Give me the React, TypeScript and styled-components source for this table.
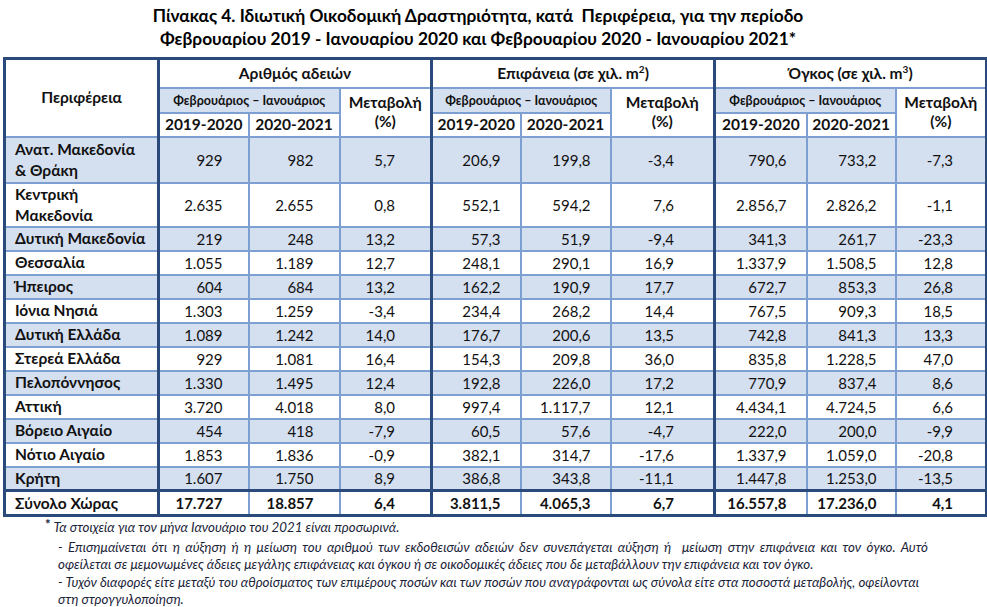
import styled, { createGlobalStyle } from 'styled-components';

const NAVY = '#294a7b';
const LINE = '#7e9fd2';
const FILL = '#d4dff0';

const GlobalStyle = createGlobalStyle`
    body {
        margin: 0;
        background: #ffffff;
        font-family: "Lato", "Noto Sans", sans-serif;
        color: #111111;
    }
`;

interface Col { w: number, pr: number, thick?: boolean }

const cols: Col[] = [
    { w: 90, pr: 25, thick: true }, { w: 91, pr: 25 }, { w: 92, pr: 35 },
    { w: 89, pr: 19, thick: true }, { w: 90, pr: 19 }, { w: 104, pr: 39 },
    { w: 92, pr: 19, thick: true }, { w: 89, pr: 18 }, { w: 91, pr: 32 },
];

const rows: string[][] = [
    ['Ανατ. Μακεδονία\n& Θράκη', '929', '982', '5,7', '206,9', '199,8', '-3,4', '790,6', '733,2', '-7,3'],
    ['Κεντρική\nΜακεδονία', '2.635', '2.655', '0,8', '552,1', '594,2', '7,6', '2.856,7', '2.826,2', '-1,1'],
    ['Δυτική Μακεδονία', '219', '248', '13,2', '57,3', '51,9', '-9,4', '341,3', '261,7', '-23,3'],
    ['Θεσσαλία', '1.055', '1.189', '12,7', '248,1', '290,1', '16,9', '1.337,9', '1.508,5', '12,8'],
    ['Ήπειρος', '604', '684', '13,2', '162,2', '190,9', '17,7', '672,7', '853,3', '26,8'],
    ['Ιόνια Νησιά', '1.303', '1.259', '-3,4', '234,4', '268,2', '14,4', '767,5', '909,3', '18,5'],
    ['Δυτική Ελλάδα', '1.089', '1.242', '14,0', '176,7', '200,6', '13,5', '742,8', '841,3', '13,3'],
    ['Στερεά Ελλάδα', '929', '1.081', '16,4', '154,3', '209,8', '36,0', '835,8', '1.228,5', '47,0'],
    ['Πελοπόννησος', '1.330', '1.495', '12,4', '192,8', '226,0', '17,2', '770,9', '837,4', '8,6'],
    ['Αττική', '3.720', '4.018', '8,0', '997,4', '1.117,7', '12,1', '4.434,1', '4.724,5', '6,6'],
    ['Βόρειο Αιγαίο', '454', '418', '-7,9', '60,5', '57,6', '-4,7', '222,0', '200,0', '-9,9'],
    ['Νότιο Αιγαίο', '1.853', '1.836', '-0,9', '382,1', '314,7', '-17,6', '1.337,9', '1.059,0', '-20,8'],
    ['Κρήτη', '1.607', '1.750', '8,9', '386,8', '343,8', '-11,1', '1.447,8', '1.253,0', '-13,5'],
];

const total = ['Σύνολο Χώρας', '17.727', '18.857', '6,4', '3.811,5', '4.065,3', '6,7', '16.557,8', '17.236,0', '4,1'];

const rowHeights = [46, 43, 24, 24, 24, 24, 24, 24, 24, 24, 24, 24, 24];

const blocks = [
    <>Αριθμός αδειών</>,
    <>Επιφάνεια (σε χιλ. m<sup>2</sup>)</>,
    <>Όγκος (σε χιλ. m<sup>3</sup>)</>,
];

export default function App(): JSX.Element {
    return (
        <Page>
            <GlobalStyle />
            <Title>
                Πίνακας 4. Ιδιωτική Οικοδομική Δραστηριότητα, κατά&nbsp; Περιφέρεια, για την περίοδο<br />
                Φεβρουαρίου 2019 - Ιανουαρίου 2020 και Φεβρουαρίου 2020 - Ιανουαρίου 2021*
            </Title>

            <Table>
                <colgroup>
                    <col style={{ width: 154 }} />
                    {cols.map((c, i) => <col key={i} style={{ width: c.w }} />)}
                </colgroup>
                <thead>
                    <tr style={{ height: 29 }}>
                        <HeadCell rowSpan={3}>Περιφέρεια</HeadCell>
                        {blocks.map((b, i) => (
                            <HeadCell key={i} colSpan={3} $thick>{b}</HeadCell>
                        ))}
                    </tr>
                    <tr style={{ height: 25 }}>
                        {blocks.map((_, i) => (
                            <>
                                <PeriodCell key={`p${i}`} colSpan={2}>Φεβρουάριος – Ιανουάριος</PeriodCell>
                                <HeadCell key={`m${i}`} rowSpan={2}>Μεταβολή<br />(%)</HeadCell>
                            </>
                        ))}
                    </tr>
                    <tr style={{ height: 24 }}>
                        {blocks.map((_, i) => (
                            <>
                                <HeadCell key={`a${i}`} $thick>2019-2020</HeadCell>
                                <HeadCell key={`b${i}`}>2020-2021</HeadCell>
                            </>
                        ))}
                    </tr>
                </thead>
                <tbody>
                    {rows.map((r, ri) => (
                        <Row key={r[0]} $fill={ri % 2 === 0} style={{ height: rowHeights[ri] }}>
                            <NameCell>{r[0]}</NameCell>
                            {r.slice(1).map((v, ci) => (
                                <NumCell key={ci} $pr={cols[ci].pr} $thick={cols[ci].thick}>{v}</NumCell>
                            ))}
                        </Row>
                    ))}
                    <TotalRow style={{ height: 25 }}>
                        <NameCell>{total[0]}</NameCell>
                        {total.slice(1).map((v, ci) => (
                            <NumCell key={ci} $pr={cols[ci].pr} $thick={cols[ci].thick}>{v}</NumCell>
                        ))}
                    </TotalRow>
                </tbody>
            </Table>

            <Notes>
                <NoteLine $first><Star>*</Star> Τα στοιχεία για τον μήνα Ιανουάριο του 2021 είναι προσωρινά.</NoteLine>
                <NoteLine $indent $justify>- Επισημαίνεται ότι η αύξηση ή η μείωση του αριθμού των εκδοθεισών αδειών δεν συνεπάγεται αύξηση ή&nbsp; μείωση στην επιφάνεια και τον όγκο. Αυτό</NoteLine>
                <NoteLine $indent>οφείλεται σε μεμονωμένες άδειες μεγάλης επιφάνειας και όγκου ή σε οικοδομικές άδειες που δε μεταβάλλουν την επιφάνεια και τον όγκο.</NoteLine>
                <NoteLine $indent>- Τυχόν διαφορές είτε μεταξύ του αθροίσματος των επιμέρους ποσών και των ποσών που αναγράφονται ως σύνολα είτε στα ποσοστά μεταβολής, οφείλονται</NoteLine>
                <NoteLine $indent>στη στρογγυλοποίηση.</NoteLine>
            </Notes>
        </Page>
    )
}


const Page = styled.div`
    width: 987px;
    padding: 4px 0 0 3px;
    box-sizing: border-box;
`;

const Title = styled.div`
    width: 950px;
    text-align: center;
    font-weight: 700;
    font-size: 17.3px;
    line-height: 23px;
    color: #000000;
    margin-bottom: 7px;
`;

const Table = styled.table`
    width: 982px;
    table-layout: fixed;
    border-collapse: collapse;
    border: 3px solid ${NAVY};
    font-size: 15px;
`;

const HeadCell = styled.th<{ $thick?: boolean }>`
    padding: 0;
    font-weight: 700;
    font-size: 15.5px;
    text-align: center;
    vertical-align: middle;
    line-height: 19px;
    background: #ffffff;
    border: 2px solid ${LINE};
    border-left: ${p => p.$thick ? `3px solid ${NAVY}` : `2px solid ${LINE}`};
    sup {
        font-size: 10px;
        line-height: 0;
    }
`;

const PeriodCell = styled(HeadCell)`
    background: ${FILL};
    font-size: 12.5px;
    border-left: 3px solid ${NAVY};
`;

const Row = styled.tr<{ $fill: boolean }>`
    background: ${p => p.$fill ? FILL : '#ffffff'};
`;

const TotalRow = styled.tr`
    background: #ffffff;
    font-weight: 700;
    border-top: 3px solid ${NAVY};
`;

const NameCell = styled.td`
    padding: 0 2px 0 9px;
    font-weight: 700;
    font-size: 15.5px;
    white-space: pre-line;
    line-height: 21px;
    border: 2px solid ${LINE};
    border-right: 3px solid ${NAVY};
`;

const NumCell = styled.td<{ $pr: number, $thick?: boolean }>`
    padding: 0 ${p => p.$pr}px 0 0;
    text-align: right;
    border: 2px solid ${LINE};
    border-left: ${p => p.$thick ? `3px solid ${NAVY}` : `2px solid ${LINE}`};
`;

const Notes = styled.div`
    padding: 2px 0 0 52px;
    width: 873px;
    font-style: italic;
    font-size: 13.3px;
    line-height: 17.5px;
    color: #1a2338;
`;

const NoteLine = styled.div<{ $indent?: boolean, $justify?: boolean, $first?: boolean }>`
    white-space: ${p => p.$justify ? 'normal' : 'nowrap'};
    padding-left: ${p => p.$indent ? '3px' : '0'};
    margin-bottom: ${p => p.$first ? '2px' : '0'};
    text-align: ${p => p.$justify ? 'justify' : 'left'};
    text-align-last: ${p => p.$justify ? 'justify' : 'auto'};
`;

const Star = styled.span`
    font-style: normal;
    font-weight: 700;
    position: relative;
    top: -3px;
    margin-left: -10px;
`;
